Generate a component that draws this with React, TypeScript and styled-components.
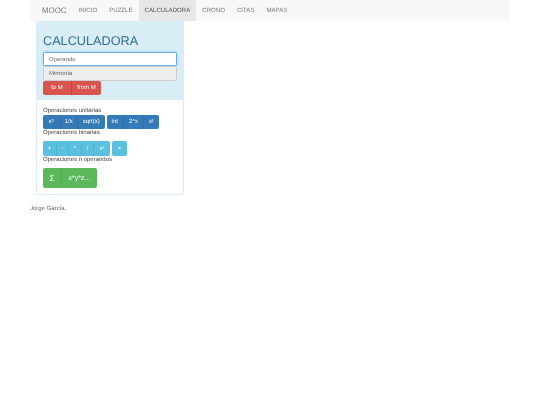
import React from "react";
import styled, { createGlobalStyle } from "styled-components";

const Global = createGlobalStyle`
  html, body { margin: 0; padding: 0; background: #fff; }
  body { font-family: "Liberation Sans", Arial, sans-serif; color: #333; font-size: 6px; text-rendering: geometricPrecision; }
  * { box-sizing: border-box; }
`;
const Page = styled.div`
  width: 540px; height: 405px; padding: 0 30px; overflow: hidden; will-change: transform;
`;
const Navbar = styled.nav`
  display: flex; height: 21px; background: #f8f8f8; align-items: stretch;
`;
const Brand = styled.a`
  display: flex; align-items: center; padding: 0 6px 1px 12px;
  font-size: 7.9px; color: #777;
`;
const NavItem = styled.a<{ $active?: boolean }>`
  display: flex; align-items: center; padding: 0 6px;
  font-size: 6.1px; color: ${p => (p.$active ? "#555" : "#777")};
  background: ${p => (p.$active ? "#e7e7e7" : "transparent")};
`;
const Panel = styled.section`
  width: 148px; height: 173.5px; margin-left: 6px; background: #fff;
  border: 0.5px solid #d9edf7; border-top: none; border-radius: 0 0 2px 2px;
`;
const PanelHead = styled.header`
  height: 78.5px; background: #d9edf7; padding: 12px 6px 0;
  display: flex; flex-direction: column; border-radius: 2px 2px 0 0;
`;
const Title = styled.h1`
  margin: 0 0 2.5px; font-size: 12.7px; line-height: 16.5px; font-weight: 500; color: #31708f;
`;
const Operand = styled.input`
  display: block; width: 134px; height: 14px; padding: 0 5px; margin: 0;
  font: 6px "Liberation Sans", Arial, sans-serif; color: #555;
  background: #fff; border: 0.5px solid #66afe9; border-radius: 1.5px;
  box-shadow: 0 0 3px rgba(102,175,233,.6); outline: none;
  &::placeholder { color: #666; opacity: 1; }
`;
const Memory = styled.div`
  width: 134px; height: 14.5px; padding: 1px 5px 0; display: flex; align-items: center;
  font-size: 6px; color: #666; background: #eee;
  border: 0.5px solid #ccc; border-radius: 1.5px;
`;
const PanelBody = styled.div`
  padding: 7.5px 6px 0; display: flex; flex-direction: column; align-items: flex-start;
`;
const Label = styled.div`
  font-size: 6px; line-height: 9.5px; height: 7px; color: #444;
`;
const Row = styled.div<{ $top?: number }>`
  display: flex; gap: 2px; margin-top: ${p => p.$top ?? 0}px;
`;
const Group = styled.div`
  display: flex; border-radius: 2px; overflow: hidden;
`;
const colors = {
  blue: ["#337ab7", "#2e6da4"],
  cyan: ["#5bc0de", "#46b8da"],
  green: ["#5cb85c", "#4cae4c"],
  red: ["#d9534f", "#d43f3a"],
} as const;
const Btn = styled.button<{ $c: keyof typeof colors; $w: number; $h: number; $size?: number }>`
  width: ${p => p.$w}px; height: ${p => p.$h}px; padding: 1px 0 0; margin: 0;
  display: flex; align-items: center; justify-content: center;
  font: ${p => p.$size ?? 6}px "Liberation Sans", Arial, sans-serif; color: #fff;
  text-rendering: geometricPrecision;
  background: ${p => colors[p.$c][0]};
  border: none; border-right: 0.5px solid ${p => colors[p.$c][1]};
  &:last-child { border-right: none; }
  sup { font-size: 4.4px; line-height: 0; position: relative; top: -1.5px; vertical-align: baseline; }
`;
const Footer = styled.p`
  margin: 11px 0 0; font-size: 6px; line-height: 7px; color: #666;
`;

export default function App() {
  return (
    <Page>
      <Global />
      <Navbar>
        <Brand>MOOC</Brand>
        <NavItem>INICIO</NavItem>
        <NavItem>PUZZLE</NavItem>
        <NavItem $active>CALCULADORA</NavItem>
        <NavItem>CRONO</NavItem>
        <NavItem>CITAS</NavItem>
        <NavItem>MAPAS</NavItem>
      </Navbar>
      <Panel>
        <PanelHead>
          <Title>CALCULADORA</Title>
          <Operand placeholder="Operando" autoFocus />
          <Memory>Memoria</Memory>
          <Row>
            <Group>
              <Btn $c="red" $w={29} $h={14}>to M</Btn>
              <Btn $c="red" $w={29} $h={14}>from M</Btn>
            </Group>
          </Row>
        </PanelHead>
        <PanelBody>
          <Label>Operaciones unitarias</Label>
          <Row $top={0.5}>
            <Group>
              <Btn $c="blue" $w={17.5} $h={14.5}>x<sup>2</sup></Btn>
              <Btn $c="blue" $w={17.5} $h={14.5}>1/x</Btn>
              <Btn $c="blue" $w={26.5} $h={14.5}>sqrt(x)</Btn>
            </Group>
            <Group>
              <Btn $c="blue" $w={17.5} $h={14.5}>int</Btn>
              <Btn $c="blue" $w={20} $h={14.5}>2^x</Btn>
              <Btn $c="blue" $w={14.5} $h={14.5}>x!</Btn>
            </Group>
          </Row>
          <Label>Operaciones binarias</Label>
          <Row $top={5}>
            <Group>
              <Btn $c="cyan" $w={14} $h={14.5}>+</Btn>
              <Btn $c="cyan" $w={12} $h={14.5}>-</Btn>
              <Btn $c="cyan" $w={13} $h={14.5}>*</Btn>
              <Btn $c="cyan" $w={12} $h={14.5}>/</Btn>
              <Btn $c="cyan" $w={16} $h={14.5}>x<sup>y</sup></Btn>
            </Group>
            <Group>
              <Btn $c="cyan" $w={15} $h={14.5}>=</Btn>
            </Group>
          </Row>
          <Label>Operaciones n operandos</Label>
          <Row $top={5}>
            <Group>
              <Btn $c="green" $w={19} $h={20} $size={8}>Σ</Btn>
              <Btn $c="green" $w={35} $h={20} $size={7}>x*y*z...</Btn>
            </Group>
          </Row>
        </PanelBody>
      </Panel>
      <Footer>Jorge García.</Footer>
    </Page>
  );
}
